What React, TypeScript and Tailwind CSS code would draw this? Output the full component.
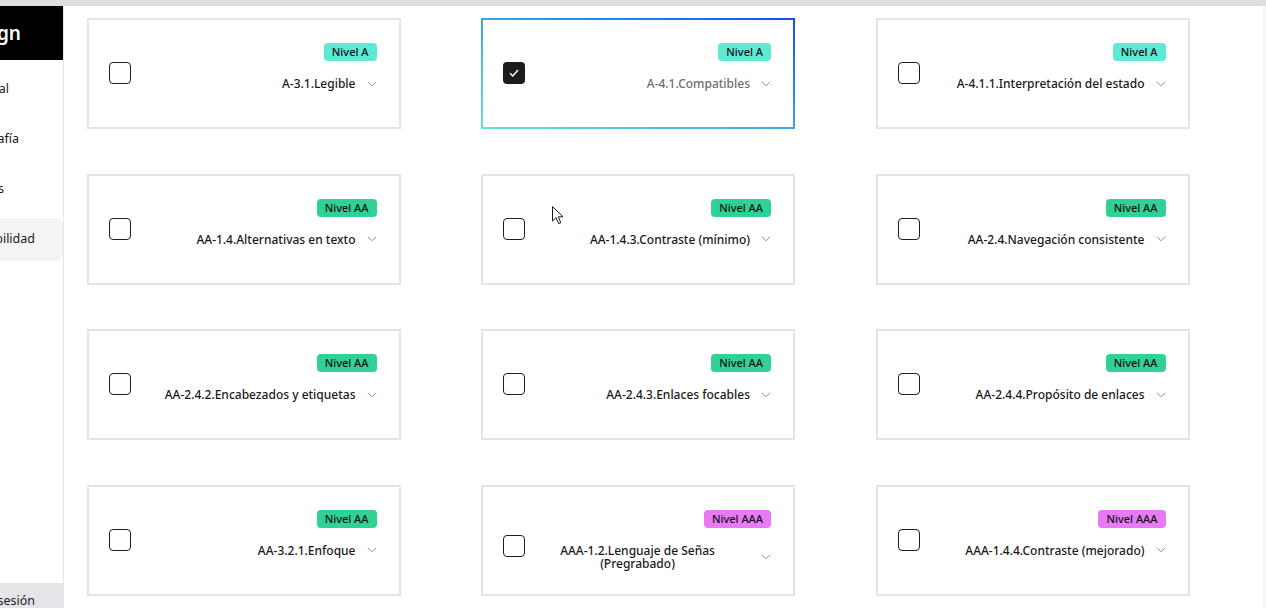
import React from "react";

type Level = "A" | "AA" | "AAA";
type Item = { level: Level; title: string; checked?: boolean };

const items: Item[] = [
  { level: "A", title: "A-3.1.Legible" },
  { level: "A", title: "A-4.1.Compatibles", checked: true },
  { level: "A", title: "A-4.1.1.Interpretación del estado" },
  { level: "AA", title: "AA-1.4.Alternativas en texto" },
  { level: "AA", title: "AA-1.4.3.Contraste (mínimo)" },
  { level: "AA", title: "AA-2.4.Navegación consistente" },
  { level: "AA", title: "AA-2.4.2.Encabezados y etiquetas" },
  { level: "AA", title: "AA-2.4.3.Enlaces focables" },
  { level: "AA", title: "AA-2.4.4.Propósito de enlaces" },
  { level: "AA", title: "AA-3.2.1.Enfoque" },
  { level: "AAA", title: "AAA-1.2.Lenguaje de Señas (Pregrabado)" },
  { level: "AAA", title: "AAA-1.4.4.Contraste (mejorado)" },
];

function Badge({ level }: { level: Level }) {
  const cls =
    level === "A"
      ? "bg-[#5ee9d5]"
      : level === "AA"
      ? "bg-[#31d195]"
      : "bg-[#e97af6]";
  return (
    <span
      className={`${cls} h-[18px] px-[8px] rounded-[4px] text-[11px] font-medium leading-[18px] text-[#111111] whitespace-nowrap`}
    >
      Nivel {level}
    </span>
  );
}

function Chevron() {
  return (
    <svg width="10" height="6" viewBox="0 0 10 6" fill="none">
      <polyline points="1,0.8 5,4.8 9,0.8" stroke="#8c8c8c" strokeWidth="1" />
    </svg>
  );
}

function Card({ item }: { item: Item }) {
  const outer = item.checked
    ? "bg-linear-to-tr from-[#5fe8d5] via-[#3ba7de] to-[#1c4be8]"
    : "bg-[#e4e4e4]";
  return (
    <div className={`${outer} p-[2px] h-[111px]`}>
      <div className="h-full bg-white pt-[23px] pl-[20px] pr-[22px] flex flex-col">
        <div className="flex justify-end">
          <Badge level={item.level} />
        </div>
        <div className="mt-[16px] flex items-start">
          <div className="self-stretch -mt-[21px] flex items-center shrink-0">
            {item.checked ? (
              <div className="w-[22px] h-[22px] rounded-[4px] bg-[#1c1c1c] flex items-center justify-center">
                <svg width="10" height="8" viewBox="0 0 10 8" fill="none">
                  <polyline
                    points="1,4.2 3.8,7 9,1"
                    stroke="#ffffff"
                    strokeWidth="1.4"
                  />
                </svg>
              </div>
            ) : (
              <div className="w-[22px] h-[22px] rounded-[4px] border-[1.5px] border-[#1f1f1f] bg-white" />
            )}
          </div>
          <div className="flex-1 min-w-0 flex justify-end">
            <span
              className={`text-center text-[12px] leading-[13px] font-medium ${
                item.checked ? "text-[#6e6e6e]" : "text-[#1a1a1a]"
              }`}
            >
              {item.title}
            </span>
          </div>
          <div className="self-center ml-[11px] flex shrink-0">
            <Chevron />
          </div>
        </div>
      </div>
    </div>
  );
}

function NavItem({
  text,
  right,
  active,
}: {
  text: string;
  right: number;
  active?: boolean;
}) {
  return (
    <div
      className={`h-[43px] flex items-center ${
        active ? "bg-[#f4f4f5] rounded-r-[8px]" : ""
      }`}
    >
      <div
        className="flex justify-end whitespace-nowrap text-[12.5px] text-[#1a1a1a]"
        style={{ width: right }}
      >
        {text}
      </div>
    </div>
  );
}

export default function App() {
  return (
    <div className="relative h-[608px] w-full overflow-hidden bg-white font-['Noto_Sans',sans-serif] flex flex-col">
      <div className="h-[6px] shrink-0 bg-[#dedee2]" />
      <div className="flex-1 flex min-h-0">
        <aside className="w-[64px] shrink-0 border-r border-[#e6e6e6] flex flex-col overflow-hidden">
          <div className="h-[54px] shrink-0 bg-black flex items-center">
            <div className="w-[21px] flex justify-end whitespace-nowrap text-white text-[19px] font-semibold">
              Design
            </div>
          </div>
          <nav className="pt-[8px] flex flex-col gap-[7px]">
            <NavItem text="General" right={9} />
            <NavItem text="Tipografía" right={19} />
            <NavItem text="Colores" right={4} />
            <NavItem text="Accesibilidad" right={35} active />
          </nav>
          <div className="mt-auto h-[25px] shrink-0 bg-[#e4e5e9] pt-[9px]">
            <div className="w-[35px] flex justify-end whitespace-nowrap text-[12.5px] leading-[18px] text-[#1a1a1a]">
              Cerrar sesión
            </div>
          </div>
        </aside>
        <main className="flex-1 min-w-0 pl-[22.5px] pt-[12px]">
          <div className="grid grid-cols-[314px_314px_314px] gap-x-[80.5px] gap-y-[44.6px]">
            {items.map((it) => (
              <Card key={it.title} item={it} />
            ))}
          </div>
        </main>
        <div className="w-[4px] shrink-0 bg-[#f8f8f8]" />
      </div>
      <svg
        className="absolute left-[552px] top-[206px]"
        width="12"
        height="19"
        viewBox="0 0 12 19"
        fill="none"
      >
        <path
          d="M0.5 0.5 L0.5 15 L4 11.6 L6.6 17.6 L8.8 16.7 L6.3 10.8 L11 10.8 Z"
          fill="#ffffff"
          stroke="#1a1a1a"
          strokeWidth="1"
          strokeLinejoin="round"
        />
      </svg>
    </div>
  );
}
